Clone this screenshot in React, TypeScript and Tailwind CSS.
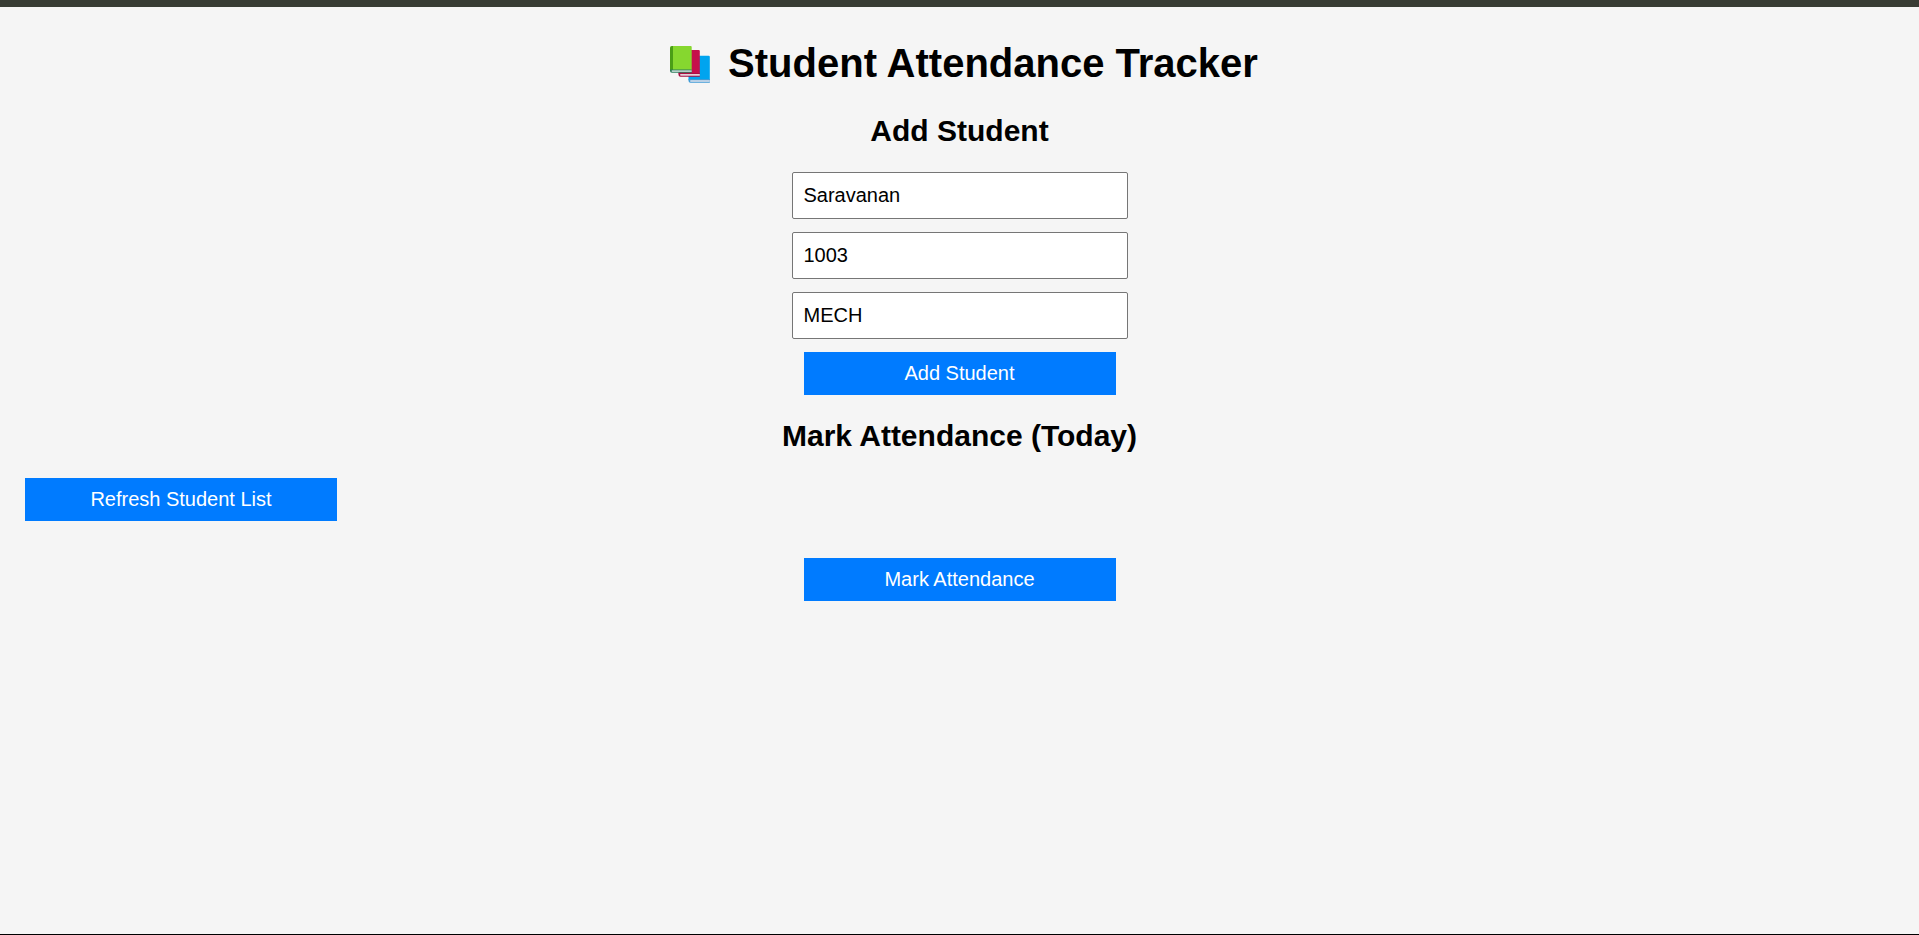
import { useState } from "react";
import type { FormEvent, ReactNode } from "react";

function BooksIcon() {
  return (
    <svg
      viewBox="0 0 55 46"
      className="h-[46px] w-[55px] shrink-0"
      role="img"
      aria-label="Books"
    >
      {/* blue book */}
      <path d="M30 15.700h17.700q1.100 0 1.100 1.100V40H27.500V18z" fill="#00a4ef" />
      <path d="M27.500 39h21.300v3.700H29.500q-2 0-2-2z" fill="#3f9bd6" />
      <path d="M29.500 39.900h19.300v2H29.500q-1-1 0-2z" fill="#b9d0e6" />
      {/* red book */}
      <path d="M20 10h17.700q1.100 0 1.100 1.100V34H17.500V12z" fill="#c50f4b" />
      <path d="M17.500 33.300h21.300v3.400H19.500q-2 0-2-2z" fill="#a50f42" />
      <path d="M19.500 34.100h19.300v1.700H19.500q-1-.9 0-1.700z" fill="#e3cfd8" />
      {/* green book */}
      <path d="M11.300 6h18.300q1.100 0 1.100 1.100V30H9V8.300Q9 6 11.300 6z" fill="#86d72f" />
      <path d="M11.300 6H12v24H9V8.300Q9 6 11.300 6z" fill="#4a9e16" />
      <path d="M9 29.500h21.700v3.200H11q-2 0-2-2z" fill="#2b7d5c" />
      <path d="M11 30.200h19.700v1.700H11q-1-.9 0-1.700z" fill="#b4cfc8" />
    </svg>
  );
}

type ActionButtonProps = {
  type?: "button" | "submit";
  onClick?: () => void;
  children: ReactNode;
};

function ActionButton({ type = "button", onClick, children }: ActionButtonProps) {
  return (
    <button
      type={type}
      onClick={onClick}
      className="h-[43px] w-[312px] max-w-full cursor-pointer bg-[#007bff] pb-0.5 text-xl leading-6 text-white"
    >
      {children}
    </button>
  );
}

type FieldProps = {
  label: string;
  value: string;
  onChange: (value: string) => void;
};

function Field({ label, value, onChange }: FieldProps) {
  return (
    <input
      type="text"
      aria-label={label}
      value={value}
      onChange={(event) => onChange(event.target.value)}
      className="h-[47px] w-[336px] max-w-full rounded-[2px] border border-[#767676] bg-white px-[11px] text-xl leading-6 text-black"
    />
  );
}

export default function App() {
  const [name, setName] = useState("Saravanan");
  const [roll, setRoll] = useState("1003");
  const [department, setDepartment] = useState("MECH");

  const keepPage = (event: FormEvent) => event.preventDefault();

  return (
    <main className="flex min-h-screen flex-col border-t-[7px] border-b border-t-[#383c34] border-b-black bg-[#f5f5f5] px-[25px] pt-[33px] font-['Liberation_Sans',Arial,sans-serif] text-black">
      <h1 className="flex items-center justify-center gap-3 text-[40px] leading-[46px] font-bold">
        <BooksIcon />
        <span>Student Attendance Tracker</span>
      </h1>

      <section className="mt-7">
        <h2 className="text-center text-[30px] leading-[34px] font-bold">Add Student</h2>
        <form onSubmit={keepPage} className="mt-6 flex flex-col items-center gap-[13px]">
          <Field label="Student name" value={name} onChange={setName} />
          <Field label="Roll number" value={roll} onChange={setRoll} />
          <Field label="Department" value={department} onChange={setDepartment} />
          <ActionButton type="submit">Add Student</ActionButton>
        </form>
      </section>

      <section className="mt-6">
        <h2 className="text-center text-[30px] leading-[34px] font-bold">
          Mark Attendance (Today)
        </h2>
        <div className="mt-[25px] flex">
          <ActionButton>Refresh Student List</ActionButton>
        </div>
        <form onSubmit={keepPage} className="mt-[37px] flex justify-center">
          <ActionButton type="submit">Mark Attendance</ActionButton>
        </form>
      </section>
    </main>
  );
}
